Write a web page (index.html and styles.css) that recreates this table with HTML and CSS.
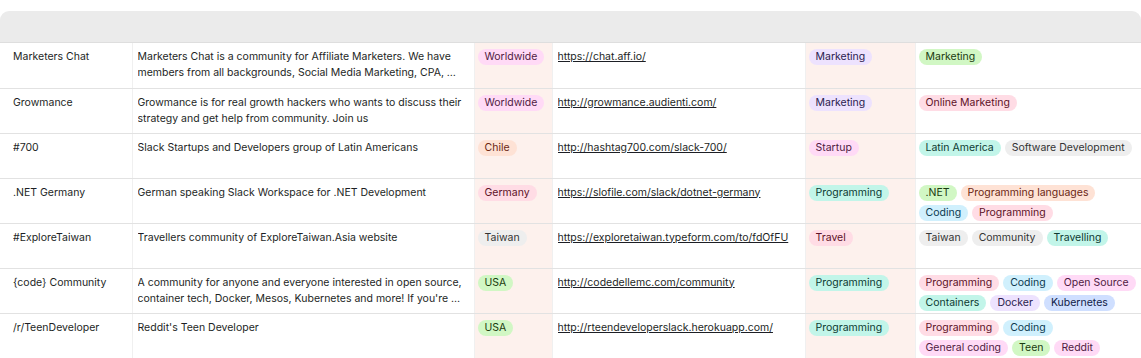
FILE: index.html
```html
<!DOCTYPE html>
<html>

<head>
    <title>Slack Communities</title>
    <link rel="stylesheet" href="styles.css">
</head>

<body>
    <div class="grid">
        <div class="head"></div>
        <table class="rows">
            <colgroup>
                <col class="c-name">
                <col class="c-desc">
                <col class="c-loc">
                <col class="c-link">
                <col class="c-cat">
                <col class="c-tags">
            </colgroup>
            <tr>
                <td class="name"><div class="cell">Marketers Chat</div></td>
                <td><div class="cell">Marketers Chat is a community for Affiliate Marketers. We have members from all backgrounds, Social Media Marketing, CPA, &hellip;</div></td>
                <td class="tint pill"><div class="cell"><span class="tag pink">Worldwide</span></div></td>
                <td><div class="cell"><a class="link" href="#">https://chat.aff.io/</a></div></td>
                <td class="tint pill"><div class="cell"><span class="tag purple">Marketing</span></div></td>
                <td class="pill"><div class="cell tags"><span class="tag green">Marketing</span></div></td>
            </tr>
            <tr>
                <td class="name"><div class="cell">Growmance</div></td>
                <td><div class="cell">Growmance is for real growth hackers who wants to discuss their strategy and get help from community. Join us</div></td>
                <td class="tint pill"><div class="cell"><span class="tag pink">Worldwide</span></div></td>
                <td><div class="cell"><a class="link" href="#">http://growmance.audienti.com/</a></div></td>
                <td class="tint pill"><div class="cell"><span class="tag purple">Marketing</span></div></td>
                <td class="pill"><div class="cell tags"><span class="tag red">Online Marketing</span></div></td>
            </tr>
            <tr>
                <td class="name"><div class="cell">#700</div></td>
                <td><div class="cell">Slack Startups and Developers group of Latin Americans</div></td>
                <td class="tint pill"><div class="cell"><span class="tag orange">Chile</span></div></td>
                <td><div class="cell"><a class="link" href="#">http://hashtag700.com/slack-700/</a></div></td>
                <td class="tint pill"><div class="cell"><span class="tag pink">Startup</span></div></td>
                <td class="pill"><div class="cell tags"><span class="tag teal">Latin America</span><span class="tag gray">Software Development</span></div></td>
            </tr>
            <tr>
                <td class="name"><div class="cell">.NET Germany</div></td>
                <td><div class="cell">German speaking Slack Workspace for .NET Development</div></td>
                <td class="tint pill"><div class="cell"><span class="tag red">Germany</span></div></td>
                <td><div class="cell"><a class="link" href="#">https://slofile.com/slack/dotnet-germany</a></div></td>
                <td class="tint pill"><div class="cell"><span class="tag teal">Programming</span></div></td>
                <td class="pill"><div class="cell tags"><span class="tag green">.NET</span><span class="tag orange">Programming languages</span><span class="tag cyan">Coding</span><span class="tag red">Programming</span></div></td>
            </tr>
            <tr>
                <td class="name"><div class="cell">#ExploreTaiwan</div></td>
                <td><div class="cell">Travellers community of ExploreTaiwan.Asia website</div></td>
                <td class="tint pill"><div class="cell"><span class="tag gray">Taiwan</span></div></td>
                <td><div class="cell"><a class="link" href="#">https://exploretaiwan.typeform.com/to/fdOfFU</a></div></td>
                <td class="tint pill"><div class="cell"><span class="tag red">Travel</span></div></td>
                <td class="pill"><div class="cell tags"><span class="tag gray">Taiwan</span><span class="tag gray">Community</span><span class="tag teal">Travelling</span></div></td>
            </tr>
            <tr>
                <td class="name"><div class="cell">{code} Community</div></td>
                <td><div class="cell">A community for anyone and everyone interested in open source, container tech, Docker, Mesos, Kubernetes and more! If you're &hellip;</div></td>
                <td class="tint pill"><div class="cell"><span class="tag green">USA</span></div></td>
                <td><div class="cell"><a class="link" href="#">http://codedellemc.com/community</a></div></td>
                <td class="tint pill"><div class="cell"><span class="tag teal">Programming</span></div></td>
                <td class="pill"><div class="cell tags"><span class="tag red">Programming</span><span class="tag cyan">Coding</span><span class="tag pink">Open Source</span><span class="tag teal">Containers</span><span class="tag purple">Docker</span><span class="tag blue">Kubernetes</span></div></td>
            </tr>
            <tr>
                <td class="name"><div class="cell">/r/TeenDeveloper</div></td>
                <td><div class="cell">Reddit's Teen Developer</div></td>
                <td class="tint pill"><div class="cell"><span class="tag green">USA</span></div></td>
                <td><div class="cell"><a class="link" href="#">http://rteendeveloperslack.herokuapp.com/</a></div></td>
                <td class="tint pill"><div class="cell"><span class="tag teal">Programming</span></div></td>
                <td class="pill"><div class="cell tags"><span class="tag red">Programming</span><span class="tag cyan">Coding</span><span class="tag pink">General coding</span><span class="tag green">Teen</span><span class="tag pink">Reddit</span></div></td>
            </tr>
        </table>
    </div>
</body>

</html>
```

FILE: styles.css
```css
body {
    margin: 0;
    padding-top: 11px;
    background-color: #FFF;
    font-family: 'Inter', 'Noto Sans', sans-serif;
    font-size: 10.5px;
    color: #1D1F25;
}

.head {
    height: 31px;
    background-color: #EBEBEB;
    border-radius: 9px 9px 0 0;
    border-bottom: 1px solid #DEDEDE;
}

.rows {
    width: 1141px;
    table-layout: fixed;
    border-collapse: collapse;
    font-size: 10.5px;
}

.c-name { width: 132px; }
.c-desc { width: 342px; }
.c-loc { width: 78px; }
.c-link { width: 253px; }
.c-cat { width: 110px; }
.c-tags { width: 226px; }

.rows td {
    height: 45px;
    padding: 6px 5px 0 5px;
    vertical-align: top;
    border-bottom: 1px solid #E2E2E2;
    border-left: 1px solid #F0F0F0;
    line-height: 16px;
    box-sizing: border-box;
}

.cell {
    max-height: 38px;
    overflow: hidden;
}

.rows td.name {
    padding-left: 13px;
    border-left: 0;
}

.rows td.pill {
    padding-left: 3px;
    padding-right: 2px;
}

.rows td.tint {
    background-color: #FDF1ED;
}

.link {
    color: #1D1F25;
    text-decoration: underline;
    white-space: nowrap;
}

.tags {
    display: flex;
    flex-wrap: wrap;
    gap: 4px;
}

.tag {
    display: inline-block;
    height: 16px;
    line-height: 16px;
    padding: 0 7px;
    border-radius: 8px;
    white-space: nowrap;
}

.pink { background-color: #FFDAF6; color: #4F1A42; }
.red { background-color: #FFDCE5; color: #5D1127; }
.orange { background-color: #FEE2D5; color: #6B2613; }
.teal { background-color: #C2F5E9; color: #0D3A32; }
.green { background-color: #D1F7C4; color: #1A3A0F; }
.cyan { background-color: #D0F0FD; color: #0B3A50; }
.blue { background-color: #CFDFFF; color: #102046; }
.purple { background-color: #EDE2FE; color: #2B1B4E; }
.gray { background-color: #EEEEEE; color: #333333; }
```
